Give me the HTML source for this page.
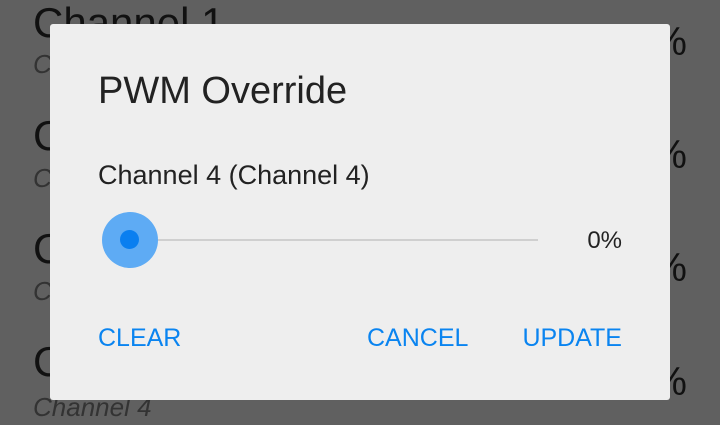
<!DOCTYPE html><html><head><style>
body{margin:0;width:720px;height:425px;background:#606060;position:relative;overflow:hidden;font-family:"Liberation Sans",sans-serif}
.t{position:absolute;white-space:nowrap;line-height:1}
.big{font-size:42px;color:#111;left:33px}
.sub{font-size:26px;font-style:italic;color:#333;left:33px}
.pc{font-size:40px;color:#111;right:33px}
.d{position:absolute;left:50px;top:24px;width:620px;height:376px;background:#eeeeee;border-radius:3px}
.b{font-size:25px;color:#0a84f0}
</style></head><body>
<div class="t big" style="top:2px">Channel 1</div>
<div class="t sub" style="top:51px">Channel 1</div>
<div class="t big" style="top:115px">Channel 2</div>
<div class="t sub" style="top:165px">Channel 2</div>
<div class="t big" style="top:228px">Channel 3</div>
<div class="t sub" style="top:278px">Channel 3</div>
<div class="t big" style="top:341px">Channel 4</div>
<div class="t sub" style="top:394px">Channel 4</div>
<div class="t pc" style="top:22px">0%</div>
<div class="t pc" style="top:135px">0%</div>
<div class="t pc" style="top:248px">0%</div>
<div class="t pc" style="top:362px">0%</div>
<div class="d"></div>
<div class="t" style="left:98px;top:72px;font-size:38px;color:#222">PWM Override</div>
<div class="t" style="left:98px;top:162px;font-size:27px;color:#222">Channel 4 (Channel 4)</div>
<div style="position:absolute;left:130px;top:239px;width:408px;height:2px;background:#cfcfcf"></div>
<div style="position:absolute;left:102px;top:212px;width:56px;height:56px;border-radius:50%;background:#5eabf4"></div>
<div style="position:absolute;left:120px;top:230px;width:19px;height:19px;border-radius:50%;background:#0a7ff0"></div>
<div class="t" style="right:98px;top:229px;font-size:24px;color:#222">0%</div>
<div class="t b" style="left:98px;top:326px">CLEAR</div>
<div class="t b" style="left:367px;top:326px">CANCEL</div>
<div class="t b" style="right:98px;top:326px">UPDATE</div>
</body></html>
